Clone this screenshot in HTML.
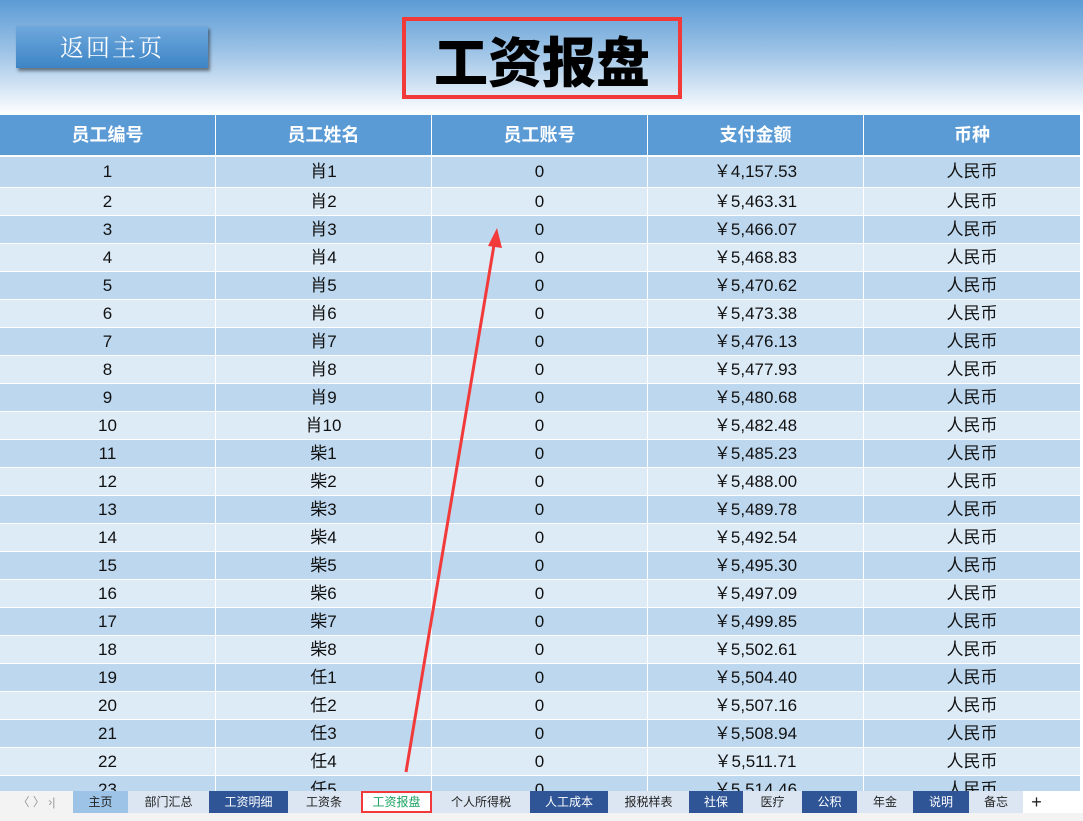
<!DOCTYPE html><html><head><meta charset="utf-8"><style>
*{margin:0;padding:0;box-sizing:border-box}
body{width:1083px;height:821px;overflow:hidden;background:#fff;font-family:"Liberation Sans","Noto Sans CJK SC",sans-serif;position:relative}
.top{position:absolute;left:0;top:0;width:1083px;height:115px;background:linear-gradient(#5b9bd5 0%,#9dc3e6 45%,#fff 100%)}
.btn{position:absolute;left:16px;top:26px;width:192px;height:42px;background:linear-gradient(#6fa8dc,#3d85c6);color:#fff;font-size:24px;text-align:center;line-height:40px;box-shadow:2px 3px 3px rgba(0,0,0,.45);font-family:"Noto Serif CJK SC",serif;letter-spacing:2px}
.title{position:absolute;left:402px;top:17px;width:280px;height:82px;border:4px solid #f33a3a;text-align:center;font-size:54px;font-weight:900;line-height:76px;color:#000;font-family:"Noto Sans CJK SC",sans-serif}
.row{position:absolute;left:0;width:1081px;display:flex}
.row div{width:216px;text-align:center;border-right:1px solid #fff;font-size:17px;color:#111}
.row div:last-child{width:217px}
.hd{top:115px;height:40px;background:#5b9bd5}
.hd div{color:#fff;font-weight:bold;font-size:18px;line-height:40px}
.tabs{position:absolute;left:0;top:791px;width:1083px;height:22px;background:#dce6f2}
.t{position:absolute;top:0;height:22px;font-size:12px;line-height:22px;text-align:center;color:#222}
.d{background:#2f5597;color:#fff}
.bot{position:absolute;left:0;top:813px;width:1083px;height:8px;background:#f3f3f3}
</style></head><body>
<div class="top"></div>
<div class="btn">返回主页</div>
<div class="title">工资报盘</div>
<div class="row hd"><div>员工编号</div><div>员工姓名</div><div>员工账号</div><div>支付金额</div><div>币种</div></div>
<div style="position:absolute;left:0;top:155px;width:1083px;height:2px;background:#fff"></div>
<div id="rows"></div>
<div class="tabs">
<div class="t" style="left:0;width:73px;color:#999;background:#f3f3f3">〈 〉 ›|</div>
<div class="t" style="left:73px;width:55px;background:#9dc3e6">主页</div>
<div class="t" style="left:128px;width:81px">部门汇总</div>
<div class="t d" style="left:209px;width:79px">工资明细</div>
<div class="t" style="left:288px;width:72px">工资条</div>
<div class="t" style="left:361px;width:71px;background:#fff;color:#1aa260;border:2px solid #f33a3a;line-height:18px">工资报盘</div>
<div class="t" style="left:432px;width:98px">个人所得税</div>
<div class="t d" style="left:530px;width:78px">人工成本</div>
<div class="t" style="left:608px;width:81px">报税样表</div>
<div class="t d" style="left:689px;width:54px">社保</div>
<div class="t" style="left:743px;width:59px">医疗</div>
<div class="t d" style="left:802px;width:55px">公积</div>
<div class="t" style="left:857px;width:56px">年金</div>
<div class="t d" style="left:913px;width:56px">说明</div>
<div class="t" style="left:969px;width:54px">备忘</div>
<div class="t" style="left:1023px;width:27px;background:#fff;font-size:18px">+</div>
<div class="t" style="left:1050px;width:33px;background:#fff"></div>
</div>
<div class="bot"></div>
<svg style="position:absolute;left:0;top:0" width="1083" height="821"><line x1="406" y1="772" x2="494" y2="245" stroke="#f33a3a" stroke-width="3"/><polygon points="497,228 488,246 502,248" fill="#f33a3a"/></svg>
<script>
(function(){
var n=["肖1","肖2","肖3","肖4","肖5","肖6","肖7","肖8","肖9","肖10","柴1","柴2","柴3","柴4","柴5","柴6","柴7","柴8","任1","任2","任3","任4","任5"];
var m=["4,157.53","5,463.31","5,466.07","5,468.83","5,470.62","5,473.38","5,476.13","5,477.93","5,480.68","5,482.48","5,485.23","5,488.00","5,489.78","5,492.54","5,495.30","5,497.09","5,499.85","5,502.61","5,504.40","5,507.16","5,508.94","5,511.71","5,514.46"];
var h="";
for(var i=0;i<23;i++){var ty=i==0?157:160+i*28,ht=i==0?31:28,lh='line-height:'+(ht-1)+'px';
h+='<div class="row" style="top:'+ty+'px;height:'+ht+'px;background:'+(i%2?'#ddebf7':'#bdd7ee')+';border-bottom:1px solid #fff"><div style="'+lh+'">'+(i+1)+'</div><div style="'+lh+'">'+n[i]+'</div><div style="'+lh+'">0</div><div style="'+lh+'">￥'+m[i]+'</div><div style="'+lh+'">人民币</div></div>';}
document.getElementById("rows").innerHTML=h;
})();
</script>
</body></html>
